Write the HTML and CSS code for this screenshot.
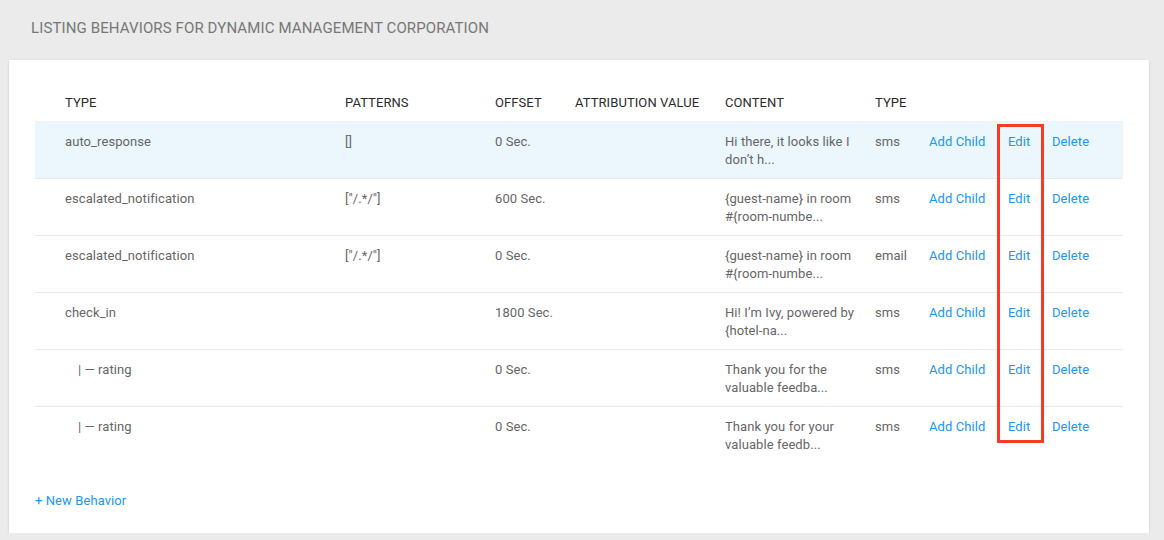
FILE: index.html
```html
<!DOCTYPE html>
<html>
<head>
<meta charset="utf-8">
<link rel="stylesheet" href="styles.css">
</head>
<body>
<h1 class="title">LISTING BEHAVIORS FOR DYNAMIC MANAGEMENT CORPORATION</h1>
<div class="card">
  <div class="table">
    <div class="row head">
      <div class="c">TYPE</div>
      <div class="c">PATTERNS</div>
      <div class="c">OFFSET</div>
      <div class="c">ATTRIBUTION VALUE</div>
      <div class="c">CONTENT</div>
      <div class="c">TYPE</div>
      <div class="c"></div>
      <div class="c"></div>
      <div class="c"></div>
    </div>
    <div class="row hl">
      <div class="c">auto_response</div>
      <div class="c">[]</div>
      <div class="c">0 Sec.</div>
      <div class="c"></div>
      <div class="c">Hi there, it looks like I<br>don’t h...</div>
      <div class="c">sms</div>
      <div class="c"><a class="lnk">Add Child</a></div>
      <div class="c"><a class="lnk">Edit</a></div>
      <div class="c"><a class="lnk">Delete</a></div>
    </div>
    <div class="row">
      <div class="c">escalated_notification</div>
      <div class="c">["/.*/"]</div>
      <div class="c">600 Sec.</div>
      <div class="c"></div>
      <div class="c">{guest-name} in room<br>#{room-numbe...</div>
      <div class="c">sms</div>
      <div class="c"><a class="lnk">Add Child</a></div>
      <div class="c"><a class="lnk">Edit</a></div>
      <div class="c"><a class="lnk">Delete</a></div>
    </div>
    <div class="row">
      <div class="c">escalated_notification</div>
      <div class="c">["/.*/"]</div>
      <div class="c">0 Sec.</div>
      <div class="c"></div>
      <div class="c">{guest-name} in room<br>#{room-numbe...</div>
      <div class="c">email</div>
      <div class="c"><a class="lnk">Add Child</a></div>
      <div class="c"><a class="lnk">Edit</a></div>
      <div class="c"><a class="lnk">Delete</a></div>
    </div>
    <div class="row">
      <div class="c">check_in</div>
      <div class="c"></div>
      <div class="c">1800 Sec.</div>
      <div class="c"></div>
      <div class="c">Hi! I’m Ivy, powered by<br>{hotel-na...</div>
      <div class="c">sms</div>
      <div class="c"><a class="lnk">Add Child</a></div>
      <div class="c"><a class="lnk">Edit</a></div>
      <div class="c"><a class="lnk">Delete</a></div>
    </div>
    <div class="row">
      <div class="c child">| — rating</div>
      <div class="c"></div>
      <div class="c">0 Sec.</div>
      <div class="c"></div>
      <div class="c">Thank you for the<br>valuable feedba...</div>
      <div class="c">sms</div>
      <div class="c"><a class="lnk">Add Child</a></div>
      <div class="c"><a class="lnk">Edit</a></div>
      <div class="c"><a class="lnk">Delete</a></div>
    </div>
    <div class="row last">
      <div class="c child">| — rating</div>
      <div class="c"></div>
      <div class="c">0 Sec.</div>
      <div class="c"></div>
      <div class="c">Thank you for your<br>valuable feedb...</div>
      <div class="c">sms</div>
      <div class="c"><a class="lnk">Add Child</a></div>
      <div class="c"><a class="lnk">Edit</a></div>
      <div class="c"><a class="lnk">Delete</a></div>
    </div>
  </div>
  <a class="lnk new">+ New Behavior</a>
  <div class="highlight-box"></div>
</div>
</body>
</html>
```

FILE: styles.css
```css
html, body {
  margin: 0;
  padding: 0;
}
body {
  background: #ebebeb;
  font-family: Roboto, "Liberation Sans", sans-serif;
  font-size: 13px;
  letter-spacing: 0.08px;
  color: #666;
}
.title {
  margin: 0;
  padding: 18px 31px 22px;
  font-size: 15px;
  letter-spacing: 0.12px;
  line-height: 20px;
  font-weight: 400;
  color: #777;
}
.card {
  position: relative;
  background: #fff;
  margin: 0 15px 0 9px;
  padding: 24px 26px 23px;
  box-shadow: 0 1px 2px rgba(0,0,0,0.18);
}
.row {
  display: grid;
  grid-template-columns: 280px 150px 80px 150px 150px 54px 79px 44px 1fr;
  padding: 11px 0 9px;
  line-height: 18px;
  border-bottom: 1px solid #ebebeb;
}
.row.head {
  padding: 10px 0 9px;
  color: #2b2b2b;
  border-bottom: 1px solid #f2f2f2;
}
.row.hl {
  background: #ebf7fd;
}
.row.last {
  border-bottom: none;
}
.c {
  padding-left: 30px;
  white-space: nowrap;
}
.c.child {
  padding-left: 43px;
}
.lnk {
  color: #2196f3;
  text-decoration: none;
  cursor: pointer;
}
.new {
  display: block;
  margin-top: 29px;
  line-height: 18px;
}
.highlight-box {
  position: absolute;
  left: 988px;
  top: 64px;
  width: 41px;
  height: 313px;
  border: 3px solid #f73b27;
}
```
